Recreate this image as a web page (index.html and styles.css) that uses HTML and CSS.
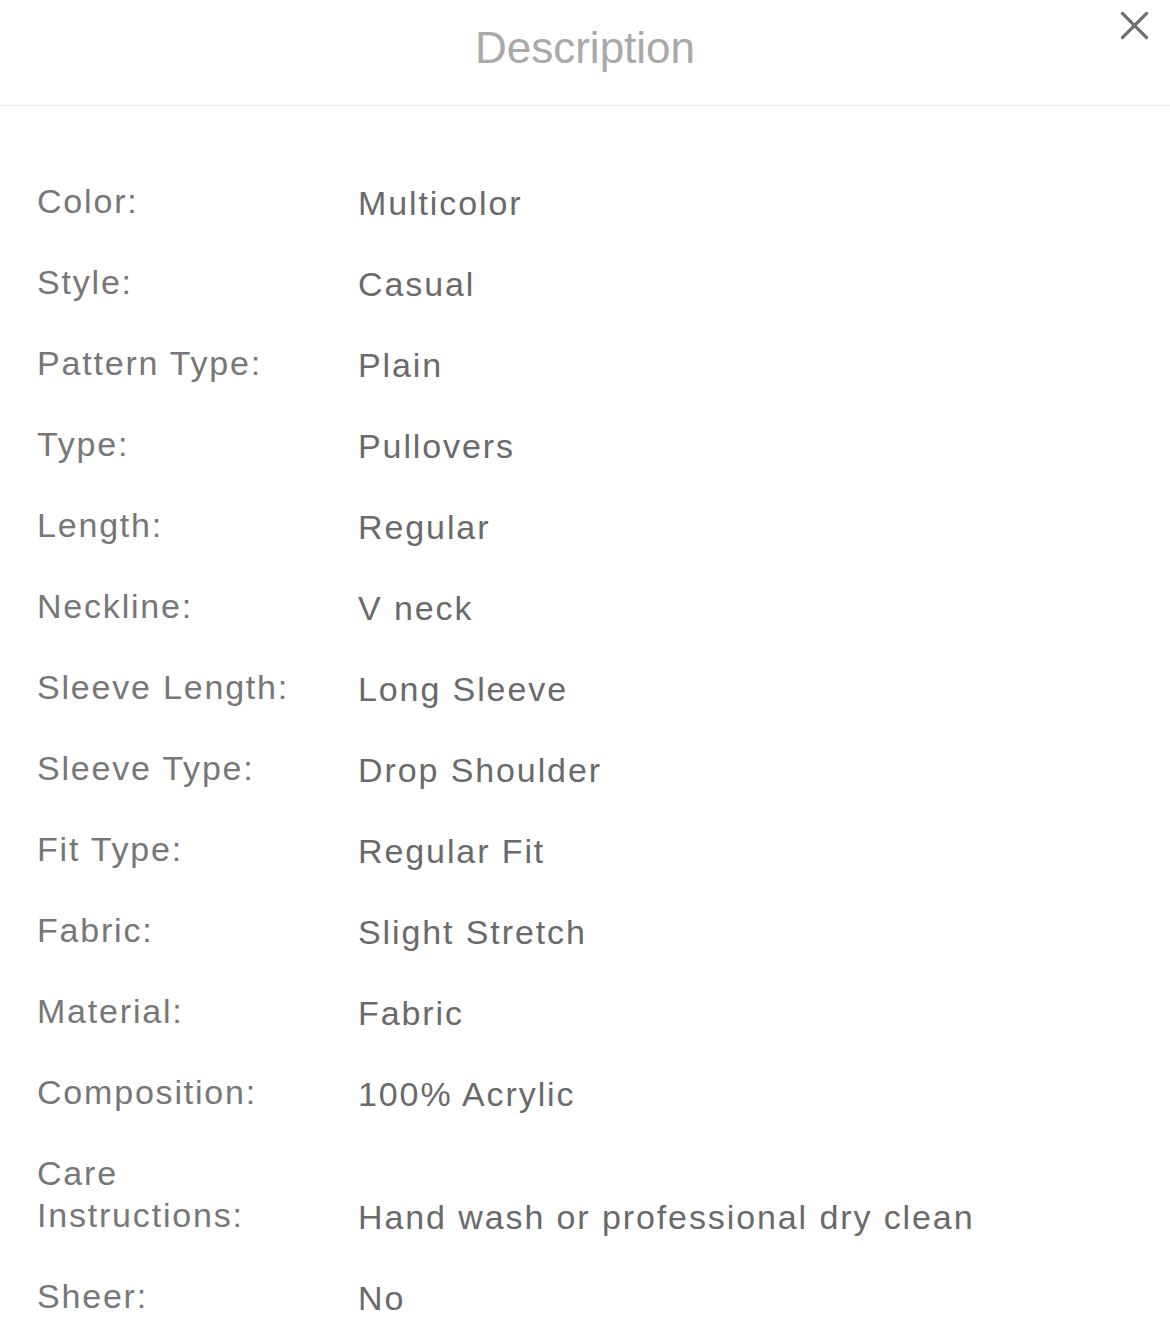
FILE: index.html
```html
<!DOCTYPE html>
<html>
<head>
<meta charset="utf-8">
<link rel="stylesheet" href="styles.css">
</head>
<body>
<div class="sheet">
  <header class="head">
    <h1 class="title">Description</h1>
    <button class="close" aria-label="Close">
      <svg width="30" height="30" viewBox="0 0 30 30"><path d="M2.5 2.5 L27.5 27.5 M27.5 2.5 L2.5 27.5" stroke="#6f6f6f" stroke-width="3.4" stroke-linecap="round"/></svg>
    </button>
  </header>
  <div class="list">
    <div class="row"><div class="label">Color:</div><div class="value">Multicolor</div></div>
    <div class="row"><div class="label">Style:</div><div class="value">Casual</div></div>
    <div class="row"><div class="label">Pattern Type:</div><div class="value">Plain</div></div>
    <div class="row"><div class="label">Type:</div><div class="value">Pullovers</div></div>
    <div class="row"><div class="label">Length:</div><div class="value">Regular</div></div>
    <div class="row"><div class="label">Neckline:</div><div class="value">V neck</div></div>
    <div class="row"><div class="label">Sleeve Length:</div><div class="value">Long Sleeve</div></div>
    <div class="row"><div class="label">Sleeve Type:</div><div class="value">Drop Shoulder</div></div>
    <div class="row"><div class="label">Fit Type:</div><div class="value">Regular Fit</div></div>
    <div class="row"><div class="label">Fabric:</div><div class="value">Slight Stretch</div></div>
    <div class="row"><div class="label">Material:</div><div class="value">Fabric</div></div>
    <div class="row"><div class="label">Composition:</div><div class="value">100% Acrylic</div></div>
    <div class="row"><div class="label">Care Instructions:</div><div class="value">Hand wash or professional dry clean</div></div>
    <div class="row"><div class="label">Sheer:</div><div class="value">No</div></div>
  </div>
</div>
</body>
</html>
```
FILE: styles.css
```css
html, body {
  margin: 0;
  padding: 0;
  background: #fff;
}
body {
  font-family: "Liberation Sans", Arial, sans-serif;
}
.sheet {
  width: 1170px;
}
.head {
  position: relative;
  height: 105px;
  border-bottom: 1px solid #e8e8e8;
  display: flex;
  justify-content: center;
}
.title {
  margin: 0;
  padding-top: 23px;
  font-size: 44px;
  line-height: 50px;
  font-weight: 400;
  color: #a9a9a9;
  letter-spacing: 0;
}
.close {
  position: absolute;
  right: 20px;
  top: 9px;
  width: 32px;
  height: 32px;
  border: 0;
  padding: 1px;
  background: none;
  display: flex;
  align-items: center;
  justify-content: center;
}
.close svg {
  width: 29px;
  height: 29px;
}
.list {
  padding: 74px 0 0 37px;
  display: flex;
  flex-direction: column;
  gap: 39px;
}
.row {
  display: flex;
  align-items: flex-end;
  font-size: 34px;
  line-height: 42px;
}
.label {
  width: 290px;
  margin-right: 31px;
  color: #777;
  letter-spacing: 1.8px;
}
.value {
  color: #6a6a6a;
  position: relative;
  top: 2px;
  letter-spacing: 1.9px;
}
```
